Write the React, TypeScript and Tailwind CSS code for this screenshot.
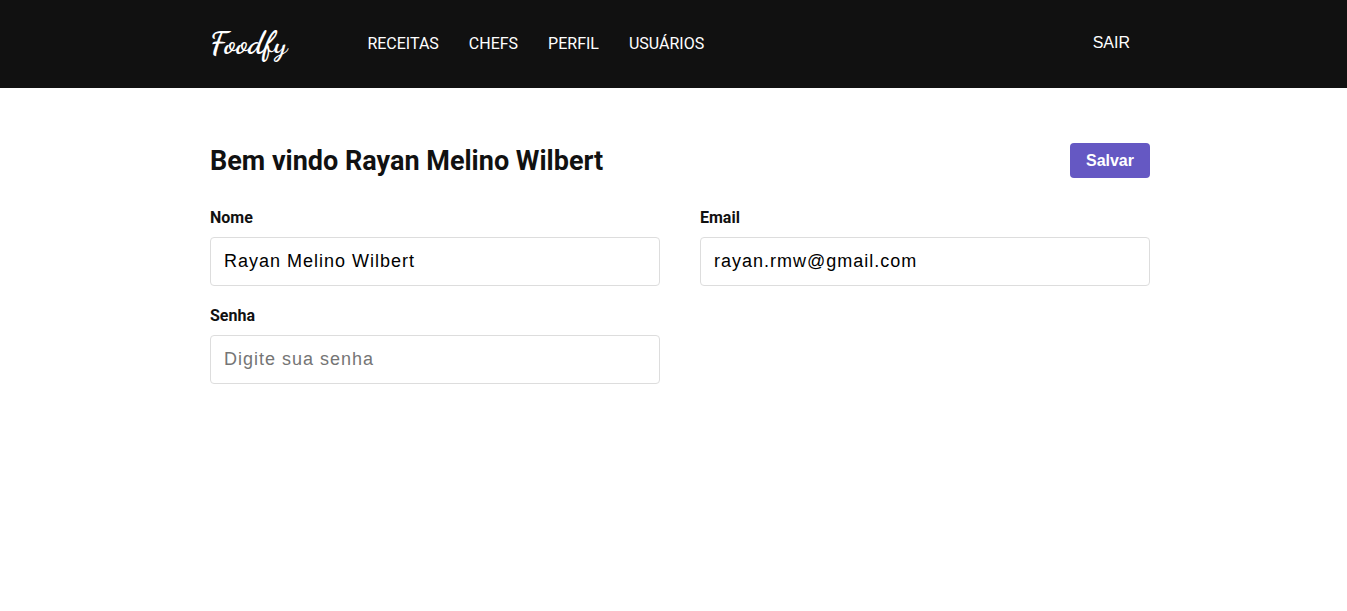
import React from "react";

const links = ["Receitas", "Chefs", "Perfil", "Usuários"];

type FieldProps = {
  id: string;
  label: string;
  type: string;
  defaultValue?: string;
  placeholder?: string;
};

function Field({ id, label, ...input }: FieldProps) {
  return (
    <div className="flex flex-col gap-[9px]">
      <label htmlFor={id} className="text-base leading-5 font-bold">
        {label}
      </label>
      <input
        id={id}
        name={id}
        {...input}
        className="h-[49px] w-full rounded border border-[#dddddd] bg-white px-[13px] font-['Liberation_Sans',Arial,sans-serif] text-lg tracking-[1px] text-black placeholder:text-[#757575]"
      />
    </div>
  );
}

export default function App() {
  return (
    <div className="min-h-screen bg-white pl-[13px] font-[Roboto,sans-serif] text-[#111111]">
      <header className="-ml-[13px] bg-[#111111] pl-[13px] text-white">
        <div className="mx-auto flex h-[88px] max-w-[940px] items-center">
          <a
            href="#"
            className="mr-20 pb-0.5 font-['Dancing_Script',cursive] text-[32px] leading-9 font-bold"
          >
            Foodfy
          </a>
          <nav className="flex gap-[30px] text-base uppercase">
            {links.map((link) => (
              <a key={link} href="#">
                {link}
              </a>
            ))}
          </nav>
          <button
            type="button"
            className="mr-5 ml-auto pb-0.5 font-['Liberation_Sans',Arial,sans-serif] text-base uppercase"
          >
            Sair
          </button>
        </div>
      </header>

      <main className="mx-auto max-w-[940px] pt-[55px]">
        <form onSubmit={(event) => event.preventDefault()}>
          <div className="flex items-start justify-between">
            <h1 className="text-[27px] leading-9 font-bold">
              Bem vindo Rayan Melino Wilbert
            </h1>
            <button
              type="submit"
              className="h-[35px] rounded bg-[#6558c3] px-4 font-['Liberation_Sans',Arial,sans-serif] text-base font-bold text-white"
            >
              Salvar
            </button>
          </div>
          <div className="mt-[29px] grid grid-cols-2 gap-x-10 gap-y-5">
            <Field id="name" label="Nome" type="text" defaultValue="Rayan Melino Wilbert" />
            <Field id="email" label="Email" type="email" defaultValue="rayan.rmw@gmail.com" />
            <Field id="password" label="Senha" type="password" placeholder="Digite sua senha" />
          </div>
        </form>
      </main>
    </div>
  );
}
